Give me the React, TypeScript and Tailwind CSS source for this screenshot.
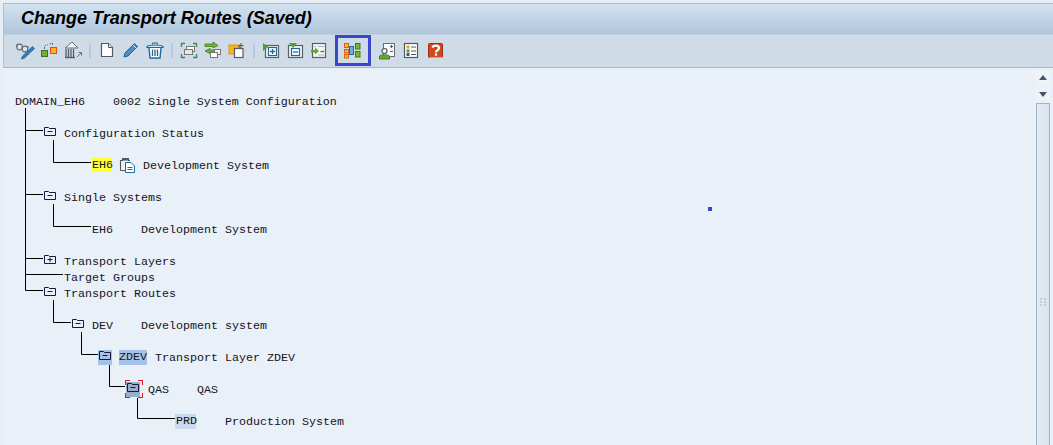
const mono = { stroke: '#5a5f66', fill: 'none' };

function Glasses() {
  return (
    <svg width="24" height="24" viewBox="0 0 24 24">
      <circle cx="6.5" cy="9" r="2.8" fill="#dfe6ec" stroke="#6b6f75" strokeWidth="1.2" />
      <circle cx="12" cy="11" r="2.8" fill="#dfe6ec" stroke="#6b6f75" strokeWidth="1.2" />
      <path d="M9 9.5L9.8 10M3.7 8.5L4.5 5.5M14.7 10L15 8" {...mono} strokeWidth="1" />
      <path d="M19.5 8.5L21.5 10.5L11.5 20L8.5 21L9.5 18Z" fill="#2f7fbf" stroke="#1f5f96" strokeWidth="0.8" />
    </svg>
  );
}

function Squares() {
  return (
    <svg width="24" height="24" viewBox="0 0 24 24">
      <rect x="4.5" y="12.5" width="6" height="6" fill="#72b03a" stroke="#3c6e2a" />
      <rect x="13.5" y="9.5" width="6" height="6" fill="#f7b51e" stroke="#d9501e" />
      <path d="M7.5 11V8L11 6.5M12.5 6L15.5 5V8" fill="none" stroke="#6b6f75" strokeDasharray="2 1" />
    </svg>
  );
}

function Building() {
  return (
    <svg width="24" height="24" viewBox="0 0 24 24">
      <path d="M4 10L11 4L17 10Z" fill="#eef2f5" stroke="#6b6f75" />
      <path d="M5 11V19M7.5 11V19M10 11V19M12.5 11V19M4 19.5H14" fill="none" stroke="#5a5f66" strokeWidth="1.3" />
      <path d="M16 19L20 15M17.5 14.5H20.5V17.5" fill="none" stroke="#6b6f75" />
    </svg>
  );
}

function Page() {
  return (
    <svg width="24" height="24" viewBox="0 0 24 24">
      <path d="M6.5 5.5H13.5L17.5 9.5V18.5H6.5Z" fill="#fff" stroke="#55595f" strokeWidth="1.2" />
      <path d="M13.5 5.5V9.5H17.5" fill="#dfe3e6" stroke="#55595f" />
    </svg>
  );
}

function Pencil() {
  return (
    <svg width="24" height="24" viewBox="0 0 24 24">
      <path d="M15.5 5.5L18.5 8.5L9 18L5 19L6 15Z" fill="#4a90c8" stroke="#236199" />
      <path d="M14 7L17 10" stroke="#cfe2f1" />
    </svg>
  );
}

function Trash() {
  return (
    <svg width="24" height="24" viewBox="0 0 24 24">
      <path d="M4 8.5C6 6.5 18 6.5 20 8.5V9.5H4Z" fill="#cfe2f1" stroke="#1d6a9c" strokeWidth="1.2" />
      <path d="M9.5 6.5V5H14.5V6.5" fill="none" stroke="#1d6a9c" />
      <path d="M6 10L7 20H17L18 10" fill="#fff" stroke="#1d6a9c" strokeWidth="1.4" />
      <path d="M9.5 11.5V18M12 11.5V18M14.5 11.5V18" stroke="#1d6a9c" strokeWidth="1.3" />
    </svg>
  );
}

function Focus() {
  return (
    <svg width="24" height="24" viewBox="0 0 24 24">
      <path d="M4.5 9V5.5H8M16 5.5H19.5V9M4.5 16V19.5H8M16 19.5H19.5V16" fill="none" stroke="#3f8a4a" strokeWidth="1.4" />
      <rect x="9.5" y="8.5" width="8" height="5" fill="#fff" stroke="#777" />
      <rect x="7.5" y="11.5" width="8" height="5" fill="#e4e8eb" stroke="#777" />
    </svg>
  );
}

function Swap() {
  return (
    <svg width="24" height="24" viewBox="0 0 24 24">
      <path d="M4 6H12V4L17 7.5L12 10V8.5H4Z" fill="#7bb52f" stroke="#3f7a22" strokeWidth="0.8" />
      <path d="M17 12H9V10.5L4 13L9 15.5V14H15Z" fill="#7bb52f" stroke="#3f7a22" strokeWidth="0.8" />
      <rect x="13.5" y="11.5" width="6" height="5" fill="#f3f5f7" stroke="#777" />
      <rect x="9.5" y="14.5" width="7" height="5" fill="#fff" stroke="#777" />
    </svg>
  );
}

function OrangeCopy() {
  return (
    <svg width="24" height="24" viewBox="0 0 24 24">
      <rect x="4" y="7" width="11" height="9" fill="#f7b51e" stroke="#e8941a" />
      <rect x="9.5" y="10.5" width="8.5" height="9" fill="#fff" stroke="#55595f" strokeWidth="1.2" />
      <path d="M16 5V10M13.5 7.5H18.5" stroke="#55595f" />
      <path d="M14 8L14 10" stroke="#55595f" />
    </svg>
  );
}

function ExpandBox() {
  return (
    <svg width="24" height="24" viewBox="0 0 24 24">
      <rect x="6.5" y="7.5" width="13" height="12" fill="#f3f6f8" stroke="#5a5f66" strokeWidth="1.2" />
      <rect x="9.5" y="9.5" width="8" height="8" fill="#fff" stroke="#1d6a9c" strokeWidth="1.2" />
      <path d="M13.5 11V16M11 13.5H16" stroke="#1d6a9c" strokeWidth="1.3" />
      <path d="M4 5L9.5 9L4 13Z" fill="#4fa02f" />
    </svg>
  );
}

function CollapseBox() {
  return (
    <svg width="24" height="24" viewBox="0 0 24 24">
      <rect x="5.5" y="7.5" width="14" height="12" fill="#f3f6f8" stroke="#5a5f66" strokeWidth="1.2" />
      <rect x="8.5" y="10.5" width="8" height="7" fill="#fff" stroke="#1d6a9c" strokeWidth="1.2" />
      <path d="M10 14H15" stroke="#1d6a9c" strokeWidth="1.3" />
      <path d="M6 5H14L10 10Z" fill="#4fa02f" />
    </svg>
  );
}

function Import() {
  return (
    <svg width="24" height="24" viewBox="0 0 24 24">
      <rect x="5.5" y="5.5" width="13" height="14" fill="#f5f7f8" stroke="#5a5f66" strokeWidth="1.2" />
      <path d="M11 8.5H17M7 8.5H9" stroke="#a9afb5" />
      <path d="M4 12H8V9.5L12 13L8 16.5V14.5H4Z" fill="#5ea52e" />
      <path d="M13.5 13.5H17" stroke="#3f8a4a" strokeWidth="1.5" />
      <path d="M11 17H17" stroke="#a9afb5" />
    </svg>
  );
}

function Routes() {
  return (
    <svg width="24" height="24" viewBox="0 0 24 24">
      <rect x="3.5" y="5.5" width="4" height="4" fill="#f7b51e" stroke="#d9601e" />
      <rect x="3.5" y="11.5" width="4" height="3.5" fill="#f7b51e" stroke="#d9601e" />
      <rect x="3.5" y="16.5" width="4" height="3.5" fill="#f7b51e" stroke="#d9601e" />
      <rect x="8.5" y="8.5" width="4" height="8" fill="#6eb0da" stroke="#1d6a9c" />
      <rect x="14.5" y="5.5" width="4.5" height="5.5" fill="#76b82f" stroke="#3f7a22" />
      <rect x="14.5" y="13.5" width="4.5" height="5.5" fill="#76b82f" stroke="#3f7a22" />
    </svg>
  );
}

function PersonDoc() {
  return (
    <svg width="24" height="24" viewBox="0 0 24 24">
      <rect x="7.5" y="5.5" width="11" height="13" fill="#f8f9fa" stroke="#6b6f75" />
      <path d="M14 8.5H17M15.5 7V10M14 13.5H17" stroke="#55595f" />
      <circle cx="8.5" cy="13" r="2.5" fill="#f3f5f6" stroke="#55595f" strokeWidth="1.2" />
      <path d="M3.5 21V18C4.5 16.5 12.5 16.5 13.5 18V21Z" fill="#64a82f" stroke="#3f7a22" />
    </svg>
  );
}

function Checklist() {
  return (
    <svg width="24" height="24" viewBox="0 0 24 24">
      <rect x="4.5" y="5.5" width="13" height="14" fill="#fff" stroke="#55595f" strokeWidth="1.2" />
      <rect x="6.5" y="7.5" width="3" height="3" fill="#e8a51e" />
      <rect x="6.5" y="11.5" width="3" height="3" fill="#5a9a2e" />
      <rect x="6.5" y="15" width="3" height="3" fill="#1d6a9c" />
      <path d="M11 9H16M11 13H16M11 16.5H16" stroke="#55595f" />
    </svg>
  );
}

function HelpBook() {
  return (
    <svg width="24" height="24" viewBox="0 0 24 24">
      <rect x="4.5" y="5.5" width="14" height="14" rx="1" fill="#cf4a1e" stroke="#9a2f12" />
      <path d="M6 19.5H18" stroke="#e9a27e" />
      <path d="M8.7 9.7C9 7 15 7 15 10C15 12.5 12 12 12 14.5" fill="none" stroke="#fff" strokeWidth="2.2" />
      <rect x="10.9" y="15.5" width="2.2" height="2.2" fill="#fff" />
    </svg>
  );
}

function Slot({ children }: { children: React.ReactNode }) {
  return <div className="w-[24px] h-[24px] flex-none">{children}</div>;
}

function Sep() {
  return (
    <div className="w-[10px] h-[24px] flex-none flex justify-center items-center">
      <div className="w-[2px] h-[15px] bg-[#b5cbe0]" />
    </div>
  );
}

function Folder({ open = false, className = 'mb-[6px]' }: { open?: boolean; className?: string }) {
  return (
    <svg width="12" height="9" viewBox="0 0 12 9" className={`flex-none ${className}`}>
      <path d="M0.5 8.5V0.5H4.5L5.5 1.5H11.5V8.5Z" fill="none" stroke="#1c1440" />
      {open ? <path d="M6 2.5V7M3.5 4.5H8.5" stroke="#1c1440" /> : <path d="M3.5 4.5H8.5" stroke="#1c1440" />}
    </svg>
  );
}

function Row({ className = '', children }: { className?: string; children?: React.ReactNode }) {
  return <div className={`h-[16px] flex items-center whitespace-pre ${className}`}>{children}</div>;
}

function TreeLines() {
  return (
    <svg className="absolute left-0 top-0" width="300" height="377" viewBox="0 68 300 377">
      <path
        d="M25.5 108V290.5H43M25.5 130.5H43M25.5 194.5H43M25.5 258.5H43M25.5 274.5H63
           M53.5 140V162.5H91M53.5 204V226.5H91
           M53.5 300V322.5H71M81.5 332V354.5H98M109.5 364V386.5H125M137.5 398V418.5H175"
        fill="none"
        stroke="#000"
        strokeWidth="1"
      />
    </svg>
  );
}

export default function App() {
  return (
    <div className="w-[1053px] h-[445px] overflow-hidden bg-[#e6edf5] pt-[3px] pl-[3px] flex flex-col">
      <div className="flex-none border-t border-l border-[#aebdcf]">
        <div className="h-[31px] flex items-center pl-[17px] pb-[2px] bg-gradient-to-b from-[#d3e2f0] to-[#afc6dc] border-b border-[#c3d2e0]">
          <span className="font-['Liberation_Sans',Arial,sans-serif] font-bold italic text-[18px] text-black">
            Change Transport Routes (Saved)
          </span>
        </div>
        <div className="h-[33px] flex items-center pl-[9px] pb-[2px] bg-[#cfdce7] border-b border-[#a6b7ca]">
          <Slot><Glasses /></Slot>
          <Slot><Squares /></Slot>
          <Slot><Building /></Slot>
          <Sep />
          <Slot><Page /></Slot>
          <Slot><Pencil /></Slot>
          <Slot><Trash /></Slot>
          <Sep />
          <Slot><Focus /></Slot>
          <Slot><Swap /></Slot>
          <Slot><OrangeCopy /></Slot>
          <Sep />
          <Slot><ExpandBox /></Slot>
          <Slot><CollapseBox /></Slot>
          <Slot><Import /></Slot>
          <div className="ml-[4px] w-[36px] h-[31px] border-[3px] border-[#3b47c9] flex items-center justify-center flex-none">
            <Routes />
          </div>
          <div className="w-[5px] flex-none" />
          <Slot><PersonDoc /></Slot>
          <Slot><Checklist /></Slot>
          <Slot><HelpBook /></Slot>
        </div>
      </div>

      <div className="flex-1 flex min-h-0 bg-[#e9f0f7]">
        <div className="flex-1 relative -ml-[3px] pt-[26px] font-['Liberation_Mono','Courier_New',monospace] text-[11.67px] leading-[16px] text-[#14141e]">
          <TreeLines />
          <div className="relative">
            <Row className="pl-[15px]">DOMAIN_EH6    0002 Single System Configuration</Row>
            <Row />
            <Row className="pl-[44px]"><Folder /><span className="ml-[8px]">Configuration Status</span></Row>
            <Row />
            <Row className="pl-[92px]">
              <span className="bg-[#ffff33] w-[20px] h-[14px] leading-[15px] mb-[2px]">EH6</span>
              <svg width="18" height="16" viewBox="0 0 18 16" className="ml-[7px] flex-none mb-[2px]">
                <path d="M1.5 13.5V3.5H3.5V1.5H9.5V3.5H11" fill="none" stroke="#55595f" strokeWidth="1.1" />
                <path d="M1.5 13.5H6" stroke="#55595f" />
                <rect x="4" y="1" width="5" height="2.5" fill="#55595f" />
                <path d="M6.5 5.5H12L15.5 9V15.5H6.5Z" fill="#fff" stroke="#1d6a9c" />
                <path d="M8.5 10.5H13.5M8.5 12.5H13.5" stroke="#1d6a9c" />
              </svg>
              <span className="ml-[6px]">Development System</span>
            </Row>
            <Row />
            <Row className="pl-[44px]"><Folder /><span className="ml-[8px]">Single Systems</span></Row>
            <Row />
            <Row className="pl-[92px]">EH6    Development System</Row>
            <Row />
            <Row className="pl-[44px]"><Folder open /><span className="ml-[8px]">Transport Layers</span></Row>
            <Row className="pl-[64px]">Target Groups</Row>
            <Row className="pl-[44px]"><Folder /><span className="ml-[8px]">Transport Routes</span></Row>
            <Row />
            <Row className="pl-[72px]"><Folder /><span className="ml-[8px]">DEV    Development system</span></Row>
            <Row />
            <Row className="pl-[98px]">
              <span className="w-[14px] h-[15px] mb-[2px] bg-[#a4c2e8] flex items-center justify-center flex-none"><Folder className="mb-[3px]" /></span>
              <span className="ml-[7px] w-[28px] h-[15px] mb-[2px] leading-[15px] bg-[#a4c2e8]">ZDEV</span>
              <span className="ml-[8px]">Transport Layer ZDEV</span>
            </Row>
            <Row />
            <Row className="pl-[126px]">
              <span className="relative w-[14px] h-[15px] mb-[2px] bg-[#98aecb] flex items-center justify-center flex-none">
                <Folder className="mb-[3px]" />
                <span className="absolute -left-[1px] -top-[2px] w-[5px] h-[5px] border-l border-t border-[#e01818]" />
                <span className="absolute -right-[3px] -top-[2px] w-[5px] h-[5px] border-r border-t border-[#e01818]" />
                <span className="absolute -left-[1px] -bottom-[1px] w-[5px] h-[5px] border-l border-b border-[#e01818]" />
                <span className="absolute -right-[3px] -bottom-[1px] w-[5px] h-[5px] border-r border-b border-[#e01818]" />
              </span>
              <span className="ml-[8px]">QAS    QAS</span>
            </Row>
            <Row />
            <Row className="pl-[175px]">
              <span className="bg-[#c9d9ee] w-[21px] h-[15px] mb-[2px] leading-[15px] pl-[1px]">PRD</span>
              <span className="ml-[29px]">Production System</span>
            </Row>
          </div>
          <div className="absolute left-[708px] top-[139px] w-[4px] h-[4px] bg-[#3b47c9]" />
        </div>

        <div className="flex-none w-[15px] mr-[3px] flex flex-col pt-[2px] gap-[2px]">
          <div className="h-[15px] flex-none bg-[#eef3f8] flex items-center justify-center">
            <div className="w-0 h-0 border-x-[4px] border-x-transparent border-b-[5px] border-b-[#44576b]" />
          </div>
          <div className="h-[15px] flex-none bg-[#eef3f8] flex items-center justify-center">
            <div className="w-0 h-0 border-x-[4px] border-x-transparent border-t-[5px] border-t-[#44576b]" />
          </div>
          <div className="flex-1 ml-[1px] -mt-[1px] border-x border-t border-[#a3b3c6] bg-gradient-to-r from-[#e2ebf5] to-[#d9e4ef] flex items-center justify-center">
            <div className="grid grid-cols-2 gap-x-[2px] gap-y-[1px] mt-[54px]">
              <div className="w-[2px] h-[2px] bg-[#c0ccd8]" />
              <div className="w-[2px] h-[2px] bg-[#c0ccd8]" />
              <div className="w-[2px] h-[2px] bg-[#c0ccd8]" />
              <div className="w-[2px] h-[2px] bg-[#c0ccd8]" />
              <div className="w-[2px] h-[2px] bg-[#c0ccd8]" />
              <div className="w-[2px] h-[2px] bg-[#c0ccd8]" />
            </div>
          </div>
        </div>
      </div>
    </div>
  );
}
